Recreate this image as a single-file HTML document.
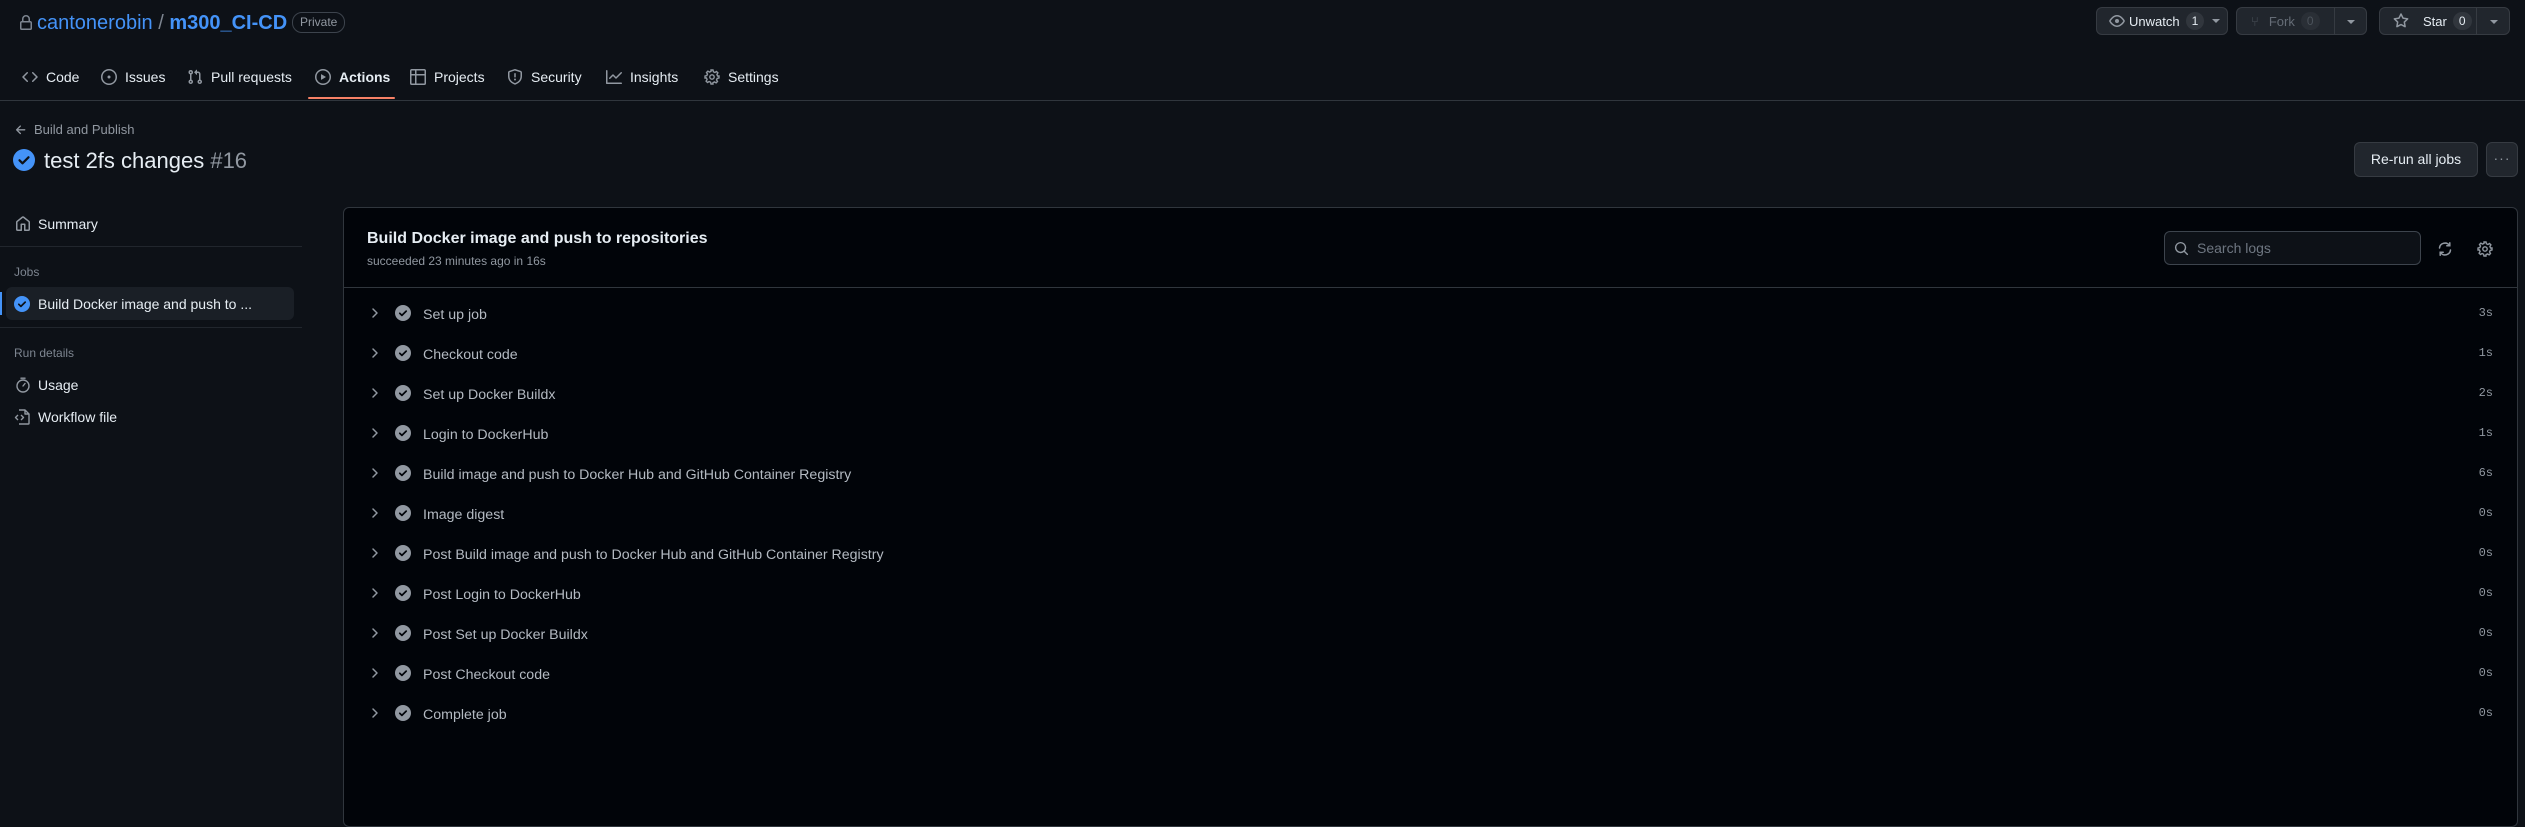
<!DOCTYPE html>
<html><head><meta charset="utf-8"><style>
*{box-sizing:border-box;margin:0;padding:0}
body{width:2525px;height:821px;background:#0d1117;color:#e6edf3;font-family:"Liberation Sans",sans-serif;font-size:14px;position:relative;overflow:hidden}
.a{position:absolute;white-space:nowrap}
.m{color:#7d8590}
svg{display:block}
.btn{position:absolute;background:#21262d;border:1px solid #363b42;border-radius:6px;height:28px;top:7px;display:flex;align-items:center;font-size:13px;color:#e6edf3}
.cnt{background:#31363d;border-radius:10px;padding:0 6px;height:18px;line-height:18px;font-size:12px;margin-left:6px}
.tab{position:absolute;top:69px;display:flex;align-items:center;color:#e6edf3}
.tab svg{margin-right:8px}
</style></head><body>
<svg class="a" style="left:18px;top:15px" width="16" height="16" viewBox="0 0 16 16" fill="#7d8590"><path d="M4 4a4 4 0 0 1 8 0v2h.25c.97 0 1.75.78 1.75 1.75v5.5A1.75 1.75 0 0 1 12.25 15h-8.5A1.75 1.75 0 0 1 2 13.25v-5.5C2 6.78 2.78 6 3.75 6H4Zm8.25 3.5h-8.5a.25.25 0 0 0-.25.25v5.5c0 .14.11.25.25.25h8.5a.25.25 0 0 0 .25-.25v-5.5a.25.25 0 0 0-.25-.25ZM10.5 6V4a2.5 2.5 0 1 0-5 0v2Z"/></svg>
<div class="a" style="left:37px;top:12px;font-size:20px;color:#4493f8">cantonerobin <span style="color:#7d8590">/</span> <span style="font-weight:bold">m300_CI-CD</span></div>
<div class="a" style="left:292px;top:12px;height:21px;line-height:19px;padding:0 7px;border:1px solid #3d444d;border-radius:10px;font-size:12px;color:#9198a1">Private</div>

<div class="btn" style="left:2096px;width:132px;padding-left:12px"><svg width="16" height="16" viewBox="0 0 16 16" fill="#9198a1"><path d="M8 2c1.98 0 3.68.96 4.970 2.08 1.29 1.12 2.22 2.44 2.66 3.2a1.45 1.45 0 0 1 0 1.44c-.44.76-1.37 2.08-2.66 3.2C11.68 13.04 9.98 14 8 14s-3.68-.96-4.97-2.08C1.74 10.8.81 9.48.37 8.72a1.45 1.45 0 0 1 0-1.44c.44-.76 1.37-2.08 2.66-3.2C4.32 2.96 6.02 2 8 2ZM1.68 8c.4.68 1.22 1.82 2.33 2.8C5.13 11.78 6.5 12.5 8 12.5s2.87-.72 3.99-1.7c1.11-.98 1.930-2.12 2.33-2.8-.4-.68-1.22-1.82-2.33-2.8C10.87 4.22 9.5 3.5 8 3.5s-2.87.72-3.99 1.7C2.9 6.18 2.08 7.32 1.68 8ZM8 10a2 2 0 1 1 0-4 2 2 0 0 1 0 4Z"/></svg><span style="margin-left:4px">Unwatch</span><span class="cnt">1</span><span style="margin-left:8px;border-top:4px solid #9198a1;border-left:4px solid transparent;border-right:4px solid transparent"></span></div>
<div class="btn" style="left:2236px;width:131px;color:#656c76"><span style="margin-left:14px;color:#4b525a">⑂</span><span style="margin-left:10px">Fork</span><span class="cnt" style="color:#4b525a;background:#2a2f36">0</span><span style="position:absolute;left:97px;top:0;bottom:0;border-left:1px solid #363b42"></span><span style="position:absolute;left:110px;top:12px;border-top:4px solid #9198a1;border-left:4px solid transparent;border-right:4px solid transparent"></span></div>
<div class="btn" style="left:2379px;width:131px"><svg style="margin-left:13px" width="16" height="16" viewBox="0 0 16 16" fill="#9198a1"><path d="M8 .25a.75.75 0 0 1 .673.418l1.882 3.815 4.21.612a.75.75 0 0 1 .416 1.279l-3.046 2.97.719 4.192a.75.75 0 0 1-1.088.791L8 12.347l-3.766 1.98a.75.75 0 0 1-1.088-.79l.72-4.194L.818 6.374a.75.75 0 0 1 .416-1.28l4.21-.611L7.327.668A.75.75 0 0 1 8 .25Zm0 2.445L6.615 5.5a.75.75 0 0 1-.564.41l-3.097.45 2.24 2.184a.75.75 0 0 1 .216.664l-.528 3.084 2.769-1.456a.75.75 0 0 1 .698 0l2.77 1.456-.53-3.084a.75.75 0 0 1 .216-.664l2.24-2.183-3.096-.45a.75.75 0 0 1-.564-.41L8 2.694Z"/></svg><span style="margin-left:14px">Star</span><span class="cnt">0</span><span style="position:absolute;left:96px;top:0;bottom:0;border-left:1px solid #363b42"></span><span style="position:absolute;left:110px;top:12px;border-top:4px solid #9198a1;border-left:4px solid transparent;border-right:4px solid transparent"></span></div>

<div class="tab" style="left:22px"><svg width="16" height="16" viewBox="0 0 16 16" fill="#9198a1"><path d="m11.28 3.22 4.25 4.25a.75.75 0 0 1 0 1.06l-4.25 4.25a.749.749 0 0 1-1.275-.326.749.749 0 0 1 .215-.734L13.94 8l-3.72-3.72a.749.749 0 0 1 .326-1.275.749.749 0 0 1 .734.215Zm-6.56 0a.751.751 0 0 1 1.042.018.751.751 0 0 1 .018 1.042L2.06 8l3.72 3.72a.749.749 0 0 1-.326 1.275.749.749 0 0 1-.734-.215L.47 8.53a.75.75 0 0 1 0-1.06Z"/></svg>Code</div>
<div class="tab" style="left:101px"><svg width="16" height="16" viewBox="0 0 16 16" fill="#9198a1"><path d="M8 9.5a1.5 1.5 0 1 0 0-3 1.5 1.5 0 0 0 0 3Z"/><path d="M8 0a8 8 0 1 1 0 16A8 8 0 0 1 8 0ZM1.5 8a6.5 6.5 0 1 0 13 0 6.5 6.5 0 0 0-13 0Z"/></svg>Issues</div>
<div class="tab" style="left:187px"><svg width="16" height="16" viewBox="0 0 16 16" fill="#9198a1"><path d="M1.5 3.25a2.25 2.25 0 1 1 3 2.122v5.256a2.251 2.251 0 1 1-1.5 0V5.372A2.25 2.25 0 0 1 1.5 3.25Zm5.677-.177L9.573.677A.25.25 0 0 1 10 .854V2.5h1A2.5 2.5 0 0 1 13.5 5v5.628a2.251 2.251 0 1 1-1.5 0V5a1 1 0 0 0-1-1h-1v1.646a.25.25 0 0 1-.427.177L7.177 3.427a.25.25 0 0 1 0-.354ZM3.75 2.5a.75.75 0 1 0 0 1.5.75.75 0 0 0 0-1.5Zm0 9.5a.75.75 0 1 0 0 1.5.75.75 0 0 0 0-1.5Zm8.25.75a.75.75 0 1 0 1.5 0 .75.75 0 0 0-1.5 0Z"/></svg>Pull requests</div>
<div class="tab" style="left:315px;font-weight:bold"><svg width="16" height="16" viewBox="0 0 16 16" fill="#9198a1"><path d="M8 0a8 8 0 1 1 0 16A8 8 0 0 1 8 0ZM1.5 8a6.5 6.5 0 1 0 13 0 6.5 6.5 0 0 0-13 0Zm4.879-2.773 4.264 2.559a.25.25 0 0 1 0 .428l-4.264 2.559A.25.25 0 0 1 6 10.559V5.442a.25.25 0 0 1 .379-.215Z"/></svg>Actions</div>
<div class="a" style="left:308px;top:97px;width:87px;height:2px;background:#f78166;border-radius:1px"></div>
<div class="tab" style="left:410px"><svg width="16" height="16" viewBox="0 0 16 16" fill="#9198a1"><path d="M0 1.75C0 .784.784 0 1.75 0h12.5C15.216 0 16 .784 16 1.75v12.5A1.75 1.75 0 0 1 14.25 16H1.75A1.75 1.75 0 0 1 0 14.25ZM6.5 6.5v8h7.750a.25.25 0 0 0 .25-.25V6.5Zm8-1.5V1.75a.25.25 0 0 0-.25-.25H6.5V5Zm-13 1.5v7.75c0 .138.112.25.25.25H5v-8ZM5 5V1.5H1.75a.25.25 0 0 0-.25.25V5Z"/></svg>Projects</div>
<div class="tab" style="left:507px"><svg width="16" height="16" viewBox="0 0 16 16" fill="#9198a1"><path d="M7.467.133a1.748 1.748 0 0 1 1.066 0l5.25 1.68A1.75 1.75 0 0 1 15 3.48V7c0 1.566-.32 3.182-1.303 4.682-.983 1.498-2.585 2.813-5.032 3.855a1.697 1.697 0 0 1-1.33 0c-2.447-1.042-4.049-2.357-5.032-3.855C1.32 10.182 1 8.566 1 7V3.48a1.755 1.755 0 0 1 1.217-1.667Zm.61 1.429a.25.25 0 0 0-.153 0l-5.25 1.68a.25.25 0 0 0-.174.238V7c0 1.358.275 2.666 1.057 3.86.784 1.194 2.121 2.34 4.366 3.297a.196.196 0 0 0 .154 0c2.245-.956 3.582-2.104 4.366-3.298C13.225 9.666 13.5 8.36 13.5 7V3.48a.251.251 0 0 0-.174-.237l-5.25-1.68ZM8.75 4.75v3a.75.75 0 0 1-1.5 0v-3a.75.75 0 0 1 1.5 0ZM9 10.5a1 1 0 1 1-2 0 1 1 0 0 1 2 0Z"/></svg>Security</div>
<div class="tab" style="left:606px"><svg width="16" height="16" viewBox="0 0 16 16" fill="#9198a1"><path d="M1.5 1.75V13.5h13.75a.75.75 0 0 1 0 1.5H.75a.75.75 0 0 1-.75-.75V1.75a.75.75 0 0 1 1.5 0Zm14.28 2.53-5.25 5.25a.75.75 0 0 1-1.060 0L7 7.06 4.28 9.78a.751.751 0 0 1-1.042-.018.751.751 0 0 1-.018-1.042l3.25-3.25a.75.75 0 0 1 1.06 0L10 7.94l4.72-4.72a.751.751 0 0 1 1.042.018.751.751 0 0 1 .018 1.042Z"/></svg>Insights</div>
<div class="tab" style="left:704px"><svg width="16" height="16" viewBox="0 0 16 16" fill="none" stroke="#9198a1" stroke-width="1.4"><circle cx="8" cy="8" r="2.2"/><path d="M7 1h2l.4 1.8 1.5.7 1.6-1 1.4 1.4-1 1.6.7 1.5L15 7v2l-1.8.4-.7 1.5 1 1.6-1.4 1.4-1.6-1-1.5.7L9 15H7l-.4-1.8-1.5-.7-1.6 1-1.4-1.4 1-1.6-.7-1.5L1 9V7l1.8-.4.7-1.5-1-1.6 1.4-1.4 1.6 1 1.5-.7Z"/></svg>Settings</div>
<div class="a" style="left:0;top:100px;width:2525px;height:1px;background:#30363d"></div>

<svg class="a" style="left:14px;top:123px" width="14" height="14" viewBox="0 0 16 16" fill="#9198a1"><path d="M7.78 12.53a.75.75 0 0 1-1.06 0L2.47 8.280a.75.75 0 0 1 0-1.06l4.25-4.25a.751.751 0 0 1 1.042.018.751.751 0 0 1 .018 1.042L4.81 7h7.44a.75.75 0 0 1 0 1.5H4.81l2.97 2.97a.75.75 0 0 1 0 1.06Z"/></svg>
<div class="a" style="left:34px;top:122px;font-size:13px;color:#9198a1">Build and Publish</div>
<svg class="a" style="left:13px;top:149px" width="22" height="22" viewBox="0 0 22 22"><circle cx="11" cy="11" r="11" fill="#4493f8"/><path d="M6.5 11.3l3 3 6-6" stroke="#0d1117" stroke-width="2.2" fill="none" stroke-linecap="round" stroke-linejoin="round"/></svg>
<div class="a" style="left:44px;top:148px;font-size:22px">test 2fs changes <span style="color:#9198a1">#16</span></div>
<div class="a" style="left:2354px;top:142px;width:124px;height:35px;background:#21262d;border:1px solid #363b42;border-radius:6px;text-align:center;line-height:33px;font-size:14px">Re-run all jobs</div>
<div class="a" style="left:2486px;top:142px;width:32px;height:35px;background:#21262d;border:1px solid #363b42;border-radius:6px;text-align:center;line-height:31px;font-size:14px;color:#9198a1;letter-spacing:1px">···</div>

<svg class="a" style="left:15px;top:216px" width="16" height="16" viewBox="0 0 16 16" fill="#9198a1"><path d="M6.906.664a1.749 1.749 0 0 1 2.187 0l5.25 4.2c.415.332.657.835.657 1.367v7.019A1.75 1.75 0 0 1 13.25 15h-3.5a.75.75 0 0 1-.75-.75V9H7v5.25a.75.75 0 0 1-.75.75h-3.5A1.75 1.75 0 0 1 1 13.25V6.23c0-.531.242-1.034.657-1.366l5.25-4.2Zm1.25 1.171a.25.25 0 0 0-.312 0l-5.25 4.2a.25.25 0 0 0-.094.196v7.019c0 .138.112.25.25.25H5.5V8.25a.75.75 0 0 1 .75-.75h3.5a.75.75 0 0 1 .75.75v5.25h2.75a.25.25 0 0 0 .25-.25V6.23a.25.25 0 0 0-.094-.195Z"/></svg>
<div class="a" style="left:38px;top:216px;font-size:14px">Summary</div>
<div class="a" style="left:0;top:246px;width:302px;height:1px;background:#21262d"></div>
<div class="a m" style="left:14px;top:265px;font-size:12px">Jobs</div>
<div class="a" style="left:6px;top:287px;width:288px;height:33px;background:#1a1f26;border-radius:6px"></div>
<div class="a" style="left:0;top:292px;width:2px;height:23px;background:#4493f8"></div>
<svg class="a" style="left:14px;top:296px" width="16" height="16" viewBox="0 0 16 16"><circle cx="8" cy="8" r="8" fill="#4493f8"/><path d="M4.8 8.3l2.1 2.1 4.3-4.3" stroke="#0d1117" stroke-width="1.7" fill="none" stroke-linecap="round" stroke-linejoin="round"/></svg>
<div class="a" style="left:38px;top:296px;font-size:14px">Build Docker image and push to ...</div>
<div class="a" style="left:0;top:327px;width:302px;height:1px;background:#21262d"></div>
<div class="a m" style="left:14px;top:346px;font-size:12px">Run details</div>
<svg class="a" style="left:15px;top:377px" width="16" height="16" viewBox="0 0 16 16" fill="none" stroke="#9198a1" stroke-width="1.4" stroke-linecap="round"><circle cx="8" cy="9" r="6"/><path d="M6 1.2h4M8 9 10 6.5"/></svg>
<div class="a" style="left:38px;top:377px;font-size:14px">Usage</div>
<svg class="a" style="left:14px;top:409px" width="16" height="16" viewBox="0 0 16 16" fill="none" stroke="#9198a1" stroke-width="1.4" stroke-linejoin="round"><path d="M5 1h6l4 4v9.5a.5.5 0 0 1-.5.5H5M11 1v4h4M4 6 1.5 8.5 4 11M7 6l2.5 2.5L7 11"/></svg>
<div class="a" style="left:38px;top:409px;font-size:14px">Workflow file</div>

<div class="a" style="left:343px;top:207px;width:2175px;height:620px;background:#010409;border:1px solid #30363d;border-radius:6px"></div>
<div class="a" style="left:367px;top:230px;font-size:16px;font-weight:bold">Build Docker image and push to repositories</div>
<div class="a m" style="left:367px;top:254px;font-size:12px;color:#9198a1">succeeded 23 minutes ago in 16s</div>
<div class="a" style="left:344px;top:287px;width:2173px;height:1px;background:#30363d"></div>
<div class="a" style="left:2164px;top:231px;width:257px;height:34px;background:#0d1117;border:1px solid #3d444d;border-radius:6px"></div>
<svg class="a" style="left:2174px;top:241px" width="15" height="15" viewBox="0 0 16 16" fill="#9198a1"><path d="M10.68 11.74a6 6 0 0 1-7.922-8.982 6 6 0 0 1 8.982 7.922l3.04 3.04a.749.749 0 0 1-.326 1.275.749.749 0 0 1-.734-.215ZM11.5 7a4.499 4.499 0 1 0-8.997 0A4.499 4.499 0 0 0 11.5 7Z"/></svg>
<div class="a" style="left:2197px;top:240px;font-size:14px;color:#6e7681">Search logs</div>
<svg class="a" style="left:2437px;top:241px" width="16" height="16" viewBox="0 0 16 16" fill="none" stroke="#9198a1" stroke-width="1.5" stroke-linecap="round"><path d="M2.5 7A5.5 5.5 0 0 1 12.5 4.5M13.5 9A5.5 5.5 0 0 1 3.5 11.5M12.8 1.8v3h-3M3.2 14.2v-3h3"/></svg>
<svg class="a" style="left:2477px;top:241px" width="16" height="16" viewBox="0 0 16 16" fill="none" stroke="#9198a1" stroke-width="1.4"><circle cx="8" cy="8" r="2.2"/><path d="M7 1h2l.4 1.8 1.5.7 1.6-1 1.4 1.4-1 1.6.7 1.5L15 7v2l-1.8.4-.7 1.5 1 1.6-1.4 1.4-1.6-1-1.5.7L9 15H7l-.4-1.8-1.5-.7-1.6 1-1.4-1.4 1-1.6-.7-1.5L1 9V7l1.8-.4.7-1.5-1-1.6 1.4-1.4 1.6 1 1.5-.7Z"/></svg>

<div id="steps"></div>
<script>
var s=[["Set up job","3s"],["Checkout code","1s"],["Set up Docker Buildx","2s"],["Login to DockerHub","1s"],["Build image and push to Docker Hub and GitHub Container Registry","6s"],["Image digest","0s"],["Post Build image and push to Docker Hub and GitHub Container Registry","0s"],["Post Login to DockerHub","0s"],["Post Set up Docker Buildx","0s"],["Post Checkout code","0s"],["Complete job","0s"]];
var h="";
s.forEach(function(x,i){var y=314+i*40;
h+='<svg class="a" style="left:369px;top:'+(y-8)+'px" width="12" height="14" viewBox="0 0 12 14"><path d="M4 3l4 4-4 4" stroke="#9198a1" stroke-width="1.5" fill="none" stroke-linecap="round" stroke-linejoin="round"/></svg>';
h+='<svg class="a" style="left:395px;top:'+(y-9)+'px" width="16" height="16" viewBox="0 0 16 16"><circle cx="8" cy="8" r="8" fill="#9198a1"/><path d="M4.8 8.3l2.1 2.1 4.3-4.3" stroke="#010409" stroke-width="1.7" fill="none" stroke-linecap="round" stroke-linejoin="round"/></svg>';
h+='<div class="a" style="left:423px;top:'+(y-7)+'px;font-size:14.2px;color:#b4bac2">'+x[0]+'</div>';
h+='<div class="a" style="right:32px;top:'+(y-8)+'px;font-family:\'Liberation Mono\',monospace;font-size:12px;color:#9198a1">'+x[1]+'</div>';});
document.getElementById("steps").innerHTML=h;
</script>
</body></html>
